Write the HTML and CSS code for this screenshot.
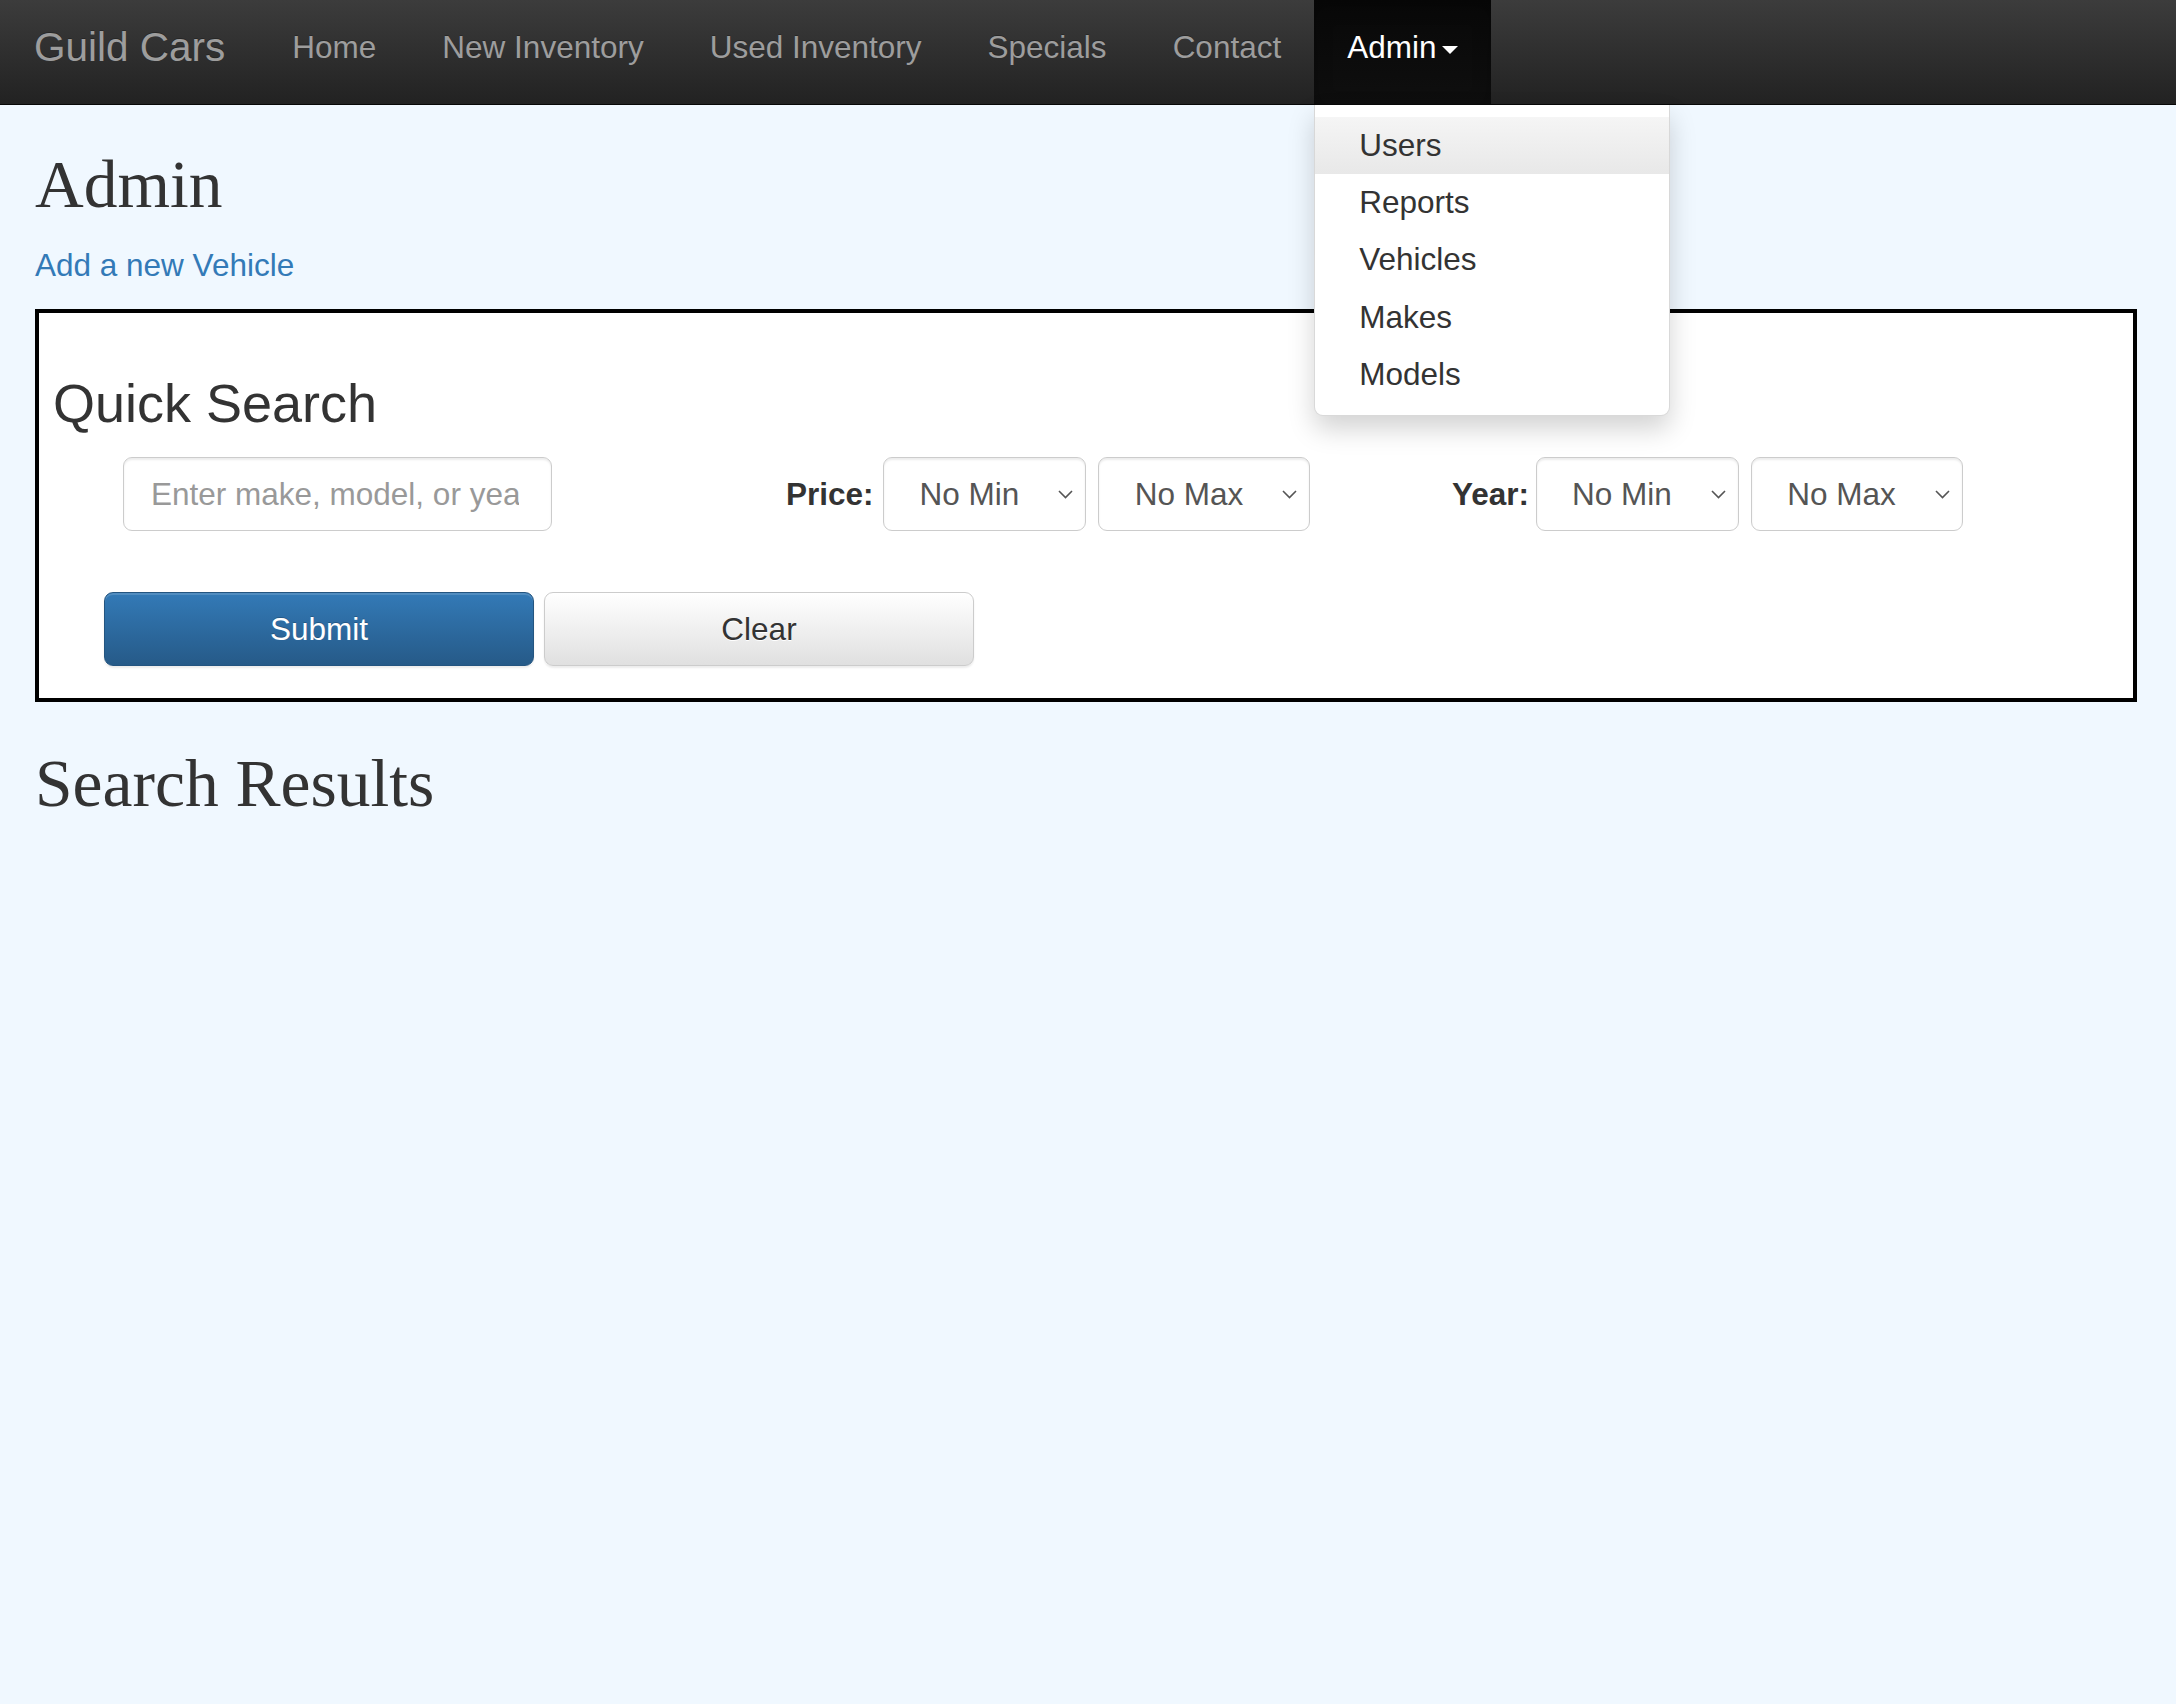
FILE: index.html
```html
<!DOCTYPE html>
<html lang="en">
<head>
<meta charset="utf-8">
<title>Guild Cars - Admin</title>
<link rel="stylesheet" href="styles.css">
</head>
<body>
<nav class="navbar">
  <a class="brand" href="#">Guild Cars</a>
  <ul class="nav">
    <li><a href="#">Home</a></li>
    <li><a href="#">New Inventory</a></li>
    <li><a href="#">Used Inventory</a></li>
    <li><a href="#">Specials</a></li>
    <li><a href="#">Contact</a></li>
    <li class="dropdown">
      <a href="#" class="active">Admin<span class="caret"></span></a>
      <ul class="dropdown-menu">
        <li><a href="#" class="hover">Users</a></li>
        <li><a href="#">Reports</a></li>
        <li><a href="#">Vehicles</a></li>
        <li><a href="#">Makes</a></li>
        <li><a href="#">Models</a></li>
      </ul>
    </li>
  </ul>
</nav>

<main class="page">
  <h2 class="page-title">Admin</h2>
  <p class="add-link"><a href="#">Add a new Vehicle</a></p>

  <section class="search-box">
    <h3 class="search-title">Quick Search</h3>
    <form class="search-form">
      <div class="filters">
        <input class="text-input" type="text" placeholder="Enter make, model, or year">
        <label class="filter-label price-label">Price:</label>
        <span class="select-wrap first-select">
          <select class="select"><option>No Min</option></select>
          <svg class="chevron" width="15" height="9" viewBox="0 0 15 9"><polyline points="1,1 7.5,7.5 14,1" fill="none" stroke="#555" stroke-width="1.6"/></svg>
        </span>
        <span class="select-wrap next-select">
          <select class="select"><option>No Max</option></select>
          <svg class="chevron" width="15" height="9" viewBox="0 0 15 9"><polyline points="1,1 7.5,7.5 14,1" fill="none" stroke="#555" stroke-width="1.6"/></svg>
        </span>
        <label class="filter-label year-label">Year:</label>
        <span class="select-wrap year-select">
          <select class="select"><option>No Min</option></select>
          <svg class="chevron" width="15" height="9" viewBox="0 0 15 9"><polyline points="1,1 7.5,7.5 14,1" fill="none" stroke="#555" stroke-width="1.6"/></svg>
        </span>
        <span class="select-wrap next-select">
          <select class="select"><option>No Max</option></select>
          <svg class="chevron" width="15" height="9" viewBox="0 0 15 9"><polyline points="1,1 7.5,7.5 14,1" fill="none" stroke="#555" stroke-width="1.6"/></svg>
        </span>
      </div>
      <div class="actions">
        <button type="button" class="btn btn-primary">Submit</button>
        <button type="button" class="btn btn-default">Clear</button>
      </div>
    </form>
  </section>

  <h2 class="page-title results-title">Search Results</h2>
</main>
</body>
</html>
```

FILE: styles.css
```css
html, body {
  margin: 0;
  padding: 0;
}

body {
  background: #f0f8ff;
  font-family: "Liberation Sans", Arial, sans-serif;
  font-size: 31.5px;
  line-height: 45px;
  color: #333;
  min-height: 1704px;
}

a {
  text-decoration: none;
}

/* Navbar */
.navbar {
  display: flex;
  height: 104px;
  border-bottom: 1px solid #080808;
  background: linear-gradient(to bottom, #3c3c3c 0%, #222222 100%);
}

.brand {
  display: block;
  padding: 25px 34px 0 34px;
  font-size: 40.5px;
  line-height: 45px;
  color: #9d9d9d;
  text-shadow: 0 -1px 0 rgba(0, 0, 0, 0.25);
}

.nav {
  display: flex;
  list-style: none;
  margin: 0;
  padding: 0;
}

.nav > li {
  position: relative;
}

.nav > li > a {
  display: block;
  height: 104px;
  box-sizing: border-box;
  padding: 25px 33px 0 33px;
  font-size: 31.5px;
  line-height: 45px;
  color: #9d9d9d;
  text-shadow: 0 -1px 0 rgba(0, 0, 0, 0.25);
}

.nav > li > a.active {
  color: #fff;
  background: linear-gradient(to bottom, #080808 0%, #0f0f0f 100%);
  box-shadow: inset 0 6px 18px rgba(0, 0, 0, 0.25);
}

.caret {
  display: inline-block;
  width: 0;
  height: 0;
  margin-left: 6px;
  vertical-align: middle;
  border-top: 8px solid #fff;
  border-left: 8px solid transparent;
  border-right: 8px solid transparent;
}

.dropdown-menu {
  position: absolute;
  top: 105px;
  left: 0;
  z-index: 10;
  box-sizing: border-box;
  width: 356px;
  margin: 0;
  padding: 12px 0;
  list-style: none;
  background: #fff;
  border: 1px solid rgba(0, 0, 0, 0.15);
  border-top: 0;
  border-radius: 0 0 9px 9px;
  box-shadow: 0 13px 27px rgba(0, 0, 0, 0.175);
}

.dropdown-menu a {
  display: block;
  padding: 6.1px 44px;
  font-size: 31.5px;
  line-height: 45px;
  color: #333;
  white-space: nowrap;
}

.dropdown-menu a.hover {
  background: linear-gradient(to bottom, #f5f5f5 0%, #e8e8e8 100%);
}

/* Page */
.page {
  padding: 0 39px 0 35px;
}

.page-title {
  margin: 43px 0 21px 0;
  font-family: "Liberation Serif", "Times New Roman", serif;
  font-size: 67.5px;
  line-height: 1.1;
  font-weight: 400;
  color: #333;
}

.add-link {
  margin: 0 0 21px 0;
}

.add-link a {
  color: #337ab7;
}

.search-box {
  border: 4px solid #000;
  background: #fff;
  padding: 0 0 32px 0;
}

.search-title {
  margin: 61px 0 23.6px 14px;
  font-size: 54px;
  line-height: 1.1;
  font-weight: 400;
  color: #333;
}

.search-form {
  margin: 0;
}

.filters {
  display: flex;
  align-items: center;
  height: 74px;
}

.text-input {
  box-sizing: border-box;
  width: 429px;
  height: 74px;
  margin: 0 0 0 84px;
  padding: 0 32px 0 27px;
  border: 1px solid #ccc;
  border-radius: 9px;
  background: #fff;
  box-shadow: inset 0 2px 2px rgba(0, 0, 0, 0.075);
  font-family: "Liberation Sans", Arial, sans-serif;
  font-size: 31.5px;
  color: #555;
  outline: none;
}

.text-input::placeholder {
  color: #999;
}

.filter-label {
  font-weight: 700;
  color: #333;
}

.price-label {
  margin-left: 234px;
}

.year-label {
  margin-left: 141.5px;
}

.select-wrap {
  position: relative;
  display: inline-flex;
}

.first-select {
  margin-left: 9.5px;
}

.year-select {
  margin-left: 6.5px;
}

.next-select {
  margin-left: 12px;
}

.select {
  -webkit-appearance: none;
  appearance: none;
  box-sizing: border-box;
  height: 74px;
  margin: 0;
  padding: 0 65.7px 0 35.5px;
  border: 1px solid #ccc;
  border-radius: 9px;
  background: #fff;
  box-shadow: inset 0 2px 2px rgba(0, 0, 0, 0.075);
  font-family: "Liberation Sans", Arial, sans-serif;
  font-size: 31.5px;
  color: #555;
  outline: none;
}

.chevron {
  position: absolute;
  right: 13px;
  top: 50%;
  margin-top: -4px;
  pointer-events: none;
}

.actions {
  display: flex;
  margin-top: 61px;
}

.btn {
  box-sizing: border-box;
  width: 430px;
  height: 74px;
  padding: 0;
  border-radius: 9px;
  font-family: "Liberation Sans", Arial, sans-serif;
  font-size: 31.5px;
  line-height: 45px;
  cursor: pointer;
  box-shadow: inset 0 2px 0 rgba(255, 255, 255, 0.15), 0 2px 2px rgba(0, 0, 0, 0.075);
}

.btn-primary {
  margin-left: 65px;
  color: #fff;
  background: linear-gradient(to bottom, #337ab7 0%, #265a88 100%);
  border: 1px solid #245580;
  text-shadow: 0 -1px 0 rgba(0, 0, 0, 0.2);
}

.btn-default {
  margin-left: 10px;
  color: #333;
  background: linear-gradient(to bottom, #ffffff 0%, #e0e0e0 100%);
  border: 1px solid #ccc;
  text-shadow: 0 1px 0 #fff;
}

.results-title {
  margin-top: 45px;
}
```
